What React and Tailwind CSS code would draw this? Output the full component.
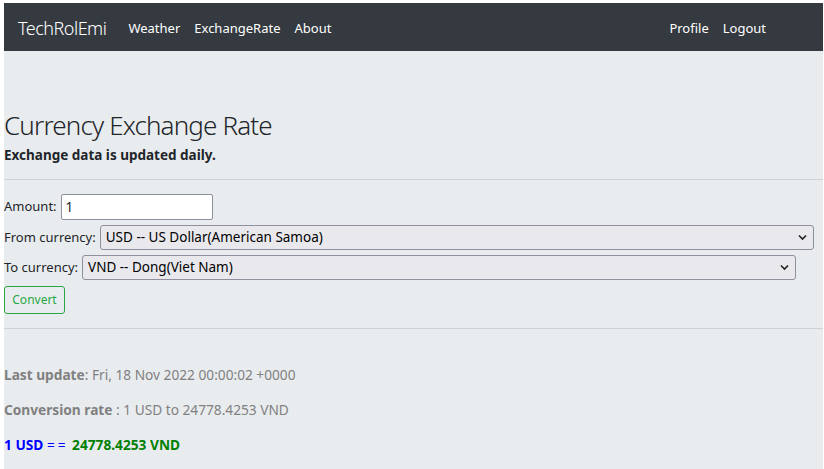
export default function App() {
  const font = { fontFamily: '"Noto Sans", "Open Sans", sans-serif' };
  return (
    <div className="bg-white pt-[3px] pl-[4px] pr-[1px] min-h-[469px]" style={font}>
      <div className="bg-[#e9ecef] min-h-[466px]">
        <nav className="h-[48px] bg-[#343a40] flex items-center pt-[3px] pl-[14px] pr-[57px] text-white">
          <span className="text-[18px] font-light mr-[22px] tracking-[-0.5px]">TechRolEmi</span>
          <div className="flex gap-[14px] text-[13px]">
            <span>Weather</span>
            <span>ExchangeRate</span>
            <span>About</span>
          </div>
          <div className="ml-auto flex gap-[14px] text-[13px]">
            <span>Profile</span>
            <span>Logout</span>
          </div>
        </nav>
        <div className="pt-[58px]">
          <h2 className="text-[26px] font-light leading-[32px] tracking-[-0.85px] text-[#212529]">Currency Exchange Rate</h2>
          <p className="text-[13.5px] font-bold text-[#212529] mt-[4px] leading-[20px]">Exchange data is updated daily.</p>
          <hr className="mt-[14px] border-t border-[#cfd2d5]" />
          <div className="mt-[14px] flex flex-col text-[13px] text-[#212529]">
            <div className="flex items-center gap-[4px] h-[26px]">
              <span>Amount:</span>
              <input
                defaultValue="1"
                className="w-[152px] h-[26px] bg-white border border-[#8f8f9d] rounded-[2px] px-[4px] text-[13.5px] outline-none"
              />
            </div>
            <div className="flex items-center gap-[4px] h-[25px] mt-[5px]">
              <span>From currency:</span>
              <Select value="USD -- US Dollar(American Samoa)" />
            </div>
            <div className="flex items-center gap-[4px] h-[25px] mt-[5px]">
              <span>To currency:</span>
              <Select value="VND -- Dong(Viet Nam)" />
            </div>
            <div className="mt-[6px]">
              <button className="h-[28px] w-[61px] border border-[#28a745] rounded-[3px] text-[#28a745] text-[12px]">
                Convert
              </button>
            </div>
          </div>
          <hr className="mt-[14px] border-t border-[#cfd2d5]" />
          <div className="mt-[36px] text-[13.7px] text-[#808080] flex flex-col gap-[15px] leading-[20px]">
            <p><b>Last update</b>: Fri, 18 Nov 2022 00:00:02 +0000</p>
            <p><b>Conversion rate</b> : 1 USD to 24778.4253 VND</p>
            <p className="font-bold"><span className="text-[#0000ff]">1 USD</span> <span className="text-[#0000ff] font-normal tracking-[3px]">==</span> <span className="text-[#008000]">24778.4253 VND</span></p>
          </div>
        </div>
      </div>
    </div>
  );
}

function Select({ value }) {
  return (
    <div className="relative w-[714px] h-[25px] bg-[#e9e9ed] border border-[#8f8f9d] rounded-[3px] flex items-center px-[5px] text-[13.5px] text-black">
      <span>{value}</span>
      <svg className="absolute right-[6px] top-[8px]" width="9" height="7" viewBox="0 0 9 7">
        <path d="M1 1.5 L4.5 5 L8 1.5" fill="none" stroke="#222" strokeWidth="1.6" />
      </svg>
    </div>
  );
}
